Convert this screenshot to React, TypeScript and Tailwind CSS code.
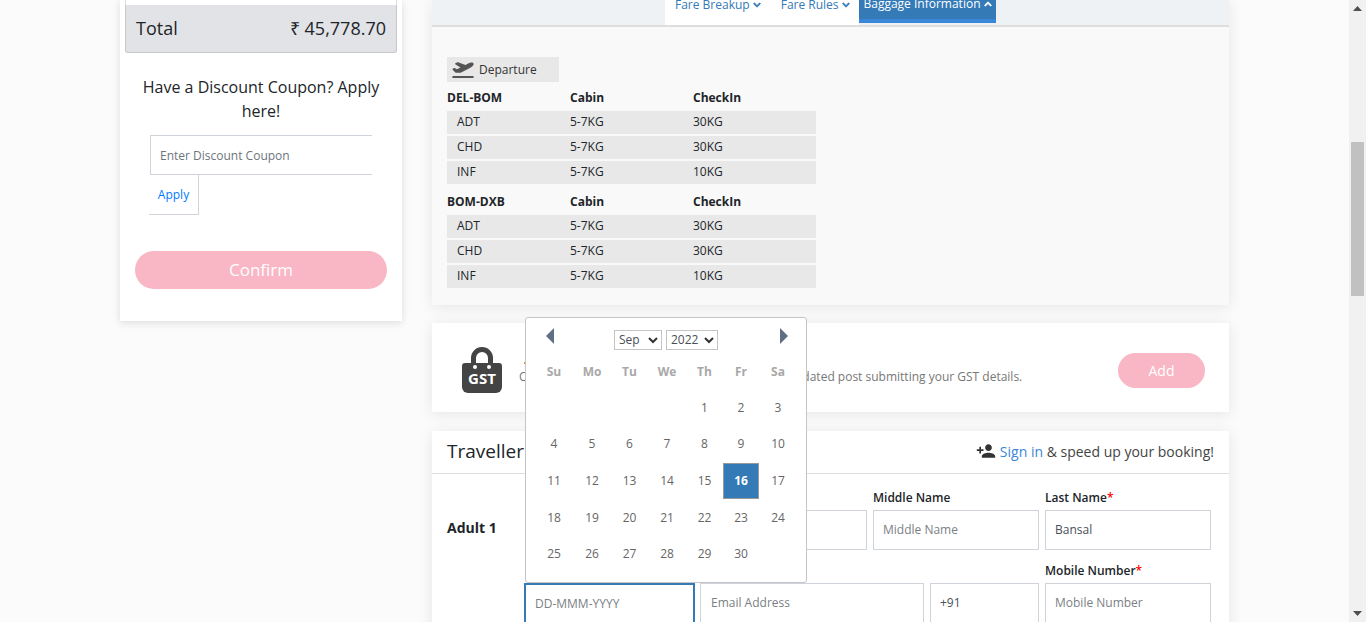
import { FaChevronDown, FaChevronUp, FaPlaneDeparture } from 'react-icons/fa'
import { MdPersonAdd } from 'react-icons/md'

const legs = [
  { route: 'DEL-BOM', rows: [['ADT', '5-7KG', '30KG'], ['CHD', '5-7KG', '30KG'], ['INF', '5-7KG', '10KG']] },
  { route: 'BOM-DXB', rows: [['ADT', '5-7KG', '30KG'], ['CHD', '5-7KG', '30KG'], ['INF', '5-7KG', '10KG']] },
]

const days = ['', '', '', '', 1, 2, 3, 4, 5, 6, 7, 8, 9, 10, 11, 12, 13, 14, 15, 16, 17, 18, 19, 20, 21, 22, 23, 24, 25, 26, 27, 28, 29, 30]

function Field({ placeholder, value, className }: { placeholder?: string; value?: string; className: string }) {
  return (
    <input
      readOnly
      placeholder={placeholder}
      defaultValue={value}
      className={`h-[40px] bg-white pb-[2px] pr-[9px] text-[12px] text-[#495057] placeholder:text-[#7b7f85] outline-none ${className}`}
    />
  )
}

function Label({ text, required, className }: { text: string; required?: boolean; className: string }) {
  return (
    <div className={`h-[23px] pt-[2px] text-[12px] leading-[18px] font-semibold text-[#212529] ${className}`}>
      {text}
      {required && <span className="text-[#ff0000]">*</span>}
    </div>
  )
}

function MonthSelect({ value, className }: { value: string; className: string }) {
  return (
    <div className={`relative h-[20px] ${className}`}>
      <select defaultValue={value} className="block h-[20px] w-full appearance-none border border-[#c5c5c5] bg-white pl-[4px] text-[12px] text-[#495057]">
        <option>{value}</option>
      </select>
      <svg width="10" height="7" viewBox="0 0 10 7" className="pointer-events-none absolute right-[4px] top-[7px]">
        <path d="M1 1l4 4 4-4" fill="none" stroke="#333" strokeWidth="2" />
      </svg>
    </div>
  )
}

function Datepicker() {
  return (
    <div className="absolute left-[93px] top-[317px] z-10 h-[266px] w-[282px] rounded-[3px] border border-[#c5c5c5] bg-white pl-[9px]">
      <div className="flex h-[40px] items-start pt-[9px]">
        <svg width="10" height="16" viewBox="0 0 10 16" className="ml-[10px] mt-[1px] text-[#5f6f86]">
          <path d="M9 0v16L1 8z" fill="currentColor" />
        </svg>
        <div className="ml-[59px] mt-[3px] flex gap-[4px]">
          <MonthSelect value="Sep" className="w-[48px]" />
          <MonthSelect value="2022" className="w-[52px]" />
        </div>
        <svg width="10" height="16" viewBox="0 0 10 16" className="ml-[61px] mt-[1px] text-[#5f6f86]">
          <path d="M1 0v16l8-8z" fill="currentColor" />
        </svg>
      </div>
      <div className="mb-[4.6px] grid h-[27px] grid-cols-[38px_38px_37px_38px_37px_36px_38px] items-center text-center text-[12px] font-bold text-[#a8a8a8]">
        {['Su', 'Mo', 'Tu', 'We', 'Th', 'Fr', 'Sa'].map(d => (
          <span key={d}>{d}</span>
        ))}
      </div>
      <div className="grid grid-cols-[38px_38px_37px_38px_37px_36px_38px] auto-rows-[36.6px] text-[12px] text-[#666]">
        {days.map((d, i) => (
          <div
            key={i}
            className={
              d === 16
                ? 'flex items-center justify-center border border-[#999] bg-[#337ab7] font-bold text-white'
                : 'flex items-center justify-center'
            }
          >
            {d}
          </div>
        ))}
      </div>
    </div>
  )
}

export default function App() {
  return (
    <div className="flex h-[622px] overflow-hidden bg-[#fbfbfb] font-['Open_Sans',sans-serif] text-[#212529]">
      <div className="flex min-w-0 flex-1 items-start gap-[30px] pl-[120px]">
        {/* Summary column */}
        <aside className="flex h-[321px] w-[282px] shrink-0 flex-col bg-white px-[5px] shadow-[0_2px_8px_rgba(0,0,0,0.12)]">
          <div className="h-[5px] border-x border-[#dcdcdc]" />
          <div className="flex h-[48px] items-center justify-between rounded-b-[3px] border border-t-0 border-[#c8c8c8] bg-[#e2e3e7] px-[10px] text-[18px]">
            <span>Total</span>
            <span>₹ 45,778.70</span>
          </div>
          <p className="mx-auto mt-[22px] w-[250px] text-center text-[16px] leading-[24px]">
            Have a Discount Coupon? Apply here!
          </p>
          <input
            readOnly
            placeholder="Enter Discount Coupon"
            className="ml-[25px] mt-[12px] h-[40px] w-[222px] shrink-0 border border-r-0 border-[#ced4da] px-[9px] text-[12px] placeholder:text-[#6c757d] outline-none"
          />
          <div className="ml-[24px] flex h-[40px] w-[50px] shrink-0 items-center justify-center border border-l-0 border-t-0 border-[#ced4da] text-[12px] text-[#007bff]">
            Apply
          </div>
          <button className="mx-[10px] mt-[36px] h-[38px] shrink-0 rounded-full bg-[#f9b6c4] text-[17px] text-white">
            Confirm
          </button>
        </aside>

        {/* Main column */}
        <main className="relative flex w-[797px] shrink-0 flex-col">
          <section className="h-[305px] bg-[#f9f9f9] shadow-[0_2px_14px_rgba(0,0,0,0.09)]">
            <div className="flex h-[27px] justify-center border-b-2 border-[#dedede] bg-[#eef2f5] pl-[233px] pr-[233px]">
              <div className="flex h-[25px] w-[194px] shrink-0 items-start gap-[20px] bg-white pl-[10px] text-[12px] leading-[10px] text-[#337ab7]">
                <span className="flex items-center gap-[3px]">Fare Breakup <FaChevronDown className="size-[8px] [stroke-width:50]" /></span>
                <span className="flex items-center gap-[3px]">Fare Rules <FaChevronDown className="size-[8px] [stroke-width:50]" /></span>
              </div>
              <div className="h-[23px] w-[137px] shrink-0 overflow-hidden border-b-[4px] border-[#3a87d9] bg-[#337ab7] text-center text-[12px] leading-[6px] text-white">
                <span className="inline-flex items-center gap-[3px]">Baggage Information <FaChevronUp className="size-[8px] [stroke-width:50]" /></span>
              </div>
            </div>
            <div className="px-[15px] pt-[30px]">
              <div className="flex h-[25px] w-[112px] items-center gap-[5px] bg-[#e8e8e8] pl-[5px] text-[12px] text-[#333]">
                <FaPlaneDeparture className="h-[17px] w-[22px] text-[#555]" />
                Departure
              </div>
              {legs.map(leg => (
                <div key={leg.route} className="mb-[2px] w-[369px] text-[12px]">
                  <div className="grid h-[29px] grid-cols-3 items-center pt-[2px] font-bold">
                    <span>{leg.route}</span>
                    <span>Cabin</span>
                    <span>CheckIn</span>
                  </div>
                  <div className="flex flex-col gap-[2px]">
                    {leg.rows.map(r => (
                      <div key={r[0]} className="grid h-[23px] grid-cols-3 items-center bg-[#e8e8e8] pb-[2px]">
                        <span className="pl-[10px]">{r[0]}</span>
                        <span>{r[1]}</span>
                        <span>{r[2]}</span>
                      </div>
                    ))}
                  </div>
                </div>
              ))}
            </div>
          </section>

          <section className="mt-[18px] flex h-[89px] items-center bg-white pl-[30px] pr-[24px] shadow-[0_2px_14px_rgba(0,0,0,0.09)]">
            <svg width="40" height="46" viewBox="0 0 40 46" className="mt-[5px] shrink-0">
              <path d="M9 16V11a11 11 0 0 1 22 0v5h-5v-5a6 6 0 0 0-12 0v5z" fill="#444" />
              <path d="M3 16h34a3 3 0 0 1 3 3v21a6 6 0 0 1-6 6H6a6 6 0 0 1-6-6V19a3 3 0 0 1 3-3z" fill="#444" />
              <circle cx="13" cy="20" r="2" fill="#fff" />
              <circle cx="27" cy="20" r="2" fill="#fff" />
              <text x="20" y="37" textAnchor="middle" fontSize="15" fontWeight="700" fill="#fff" fontFamily="Open Sans">GST</text>
            </svg>
            <div className="ml-[17px] mt-[13px]">
              <div className="mb-[4px] ml-[5px] h-[2px] w-[2px] bg-[#e8902a]" />
              <p className="text-[12px] leading-[18px] whitespace-nowrap text-[#777]">
                Claim credit of GST charges. Your taxes may get updated post submitting your GST details.
              </p>
            </div>
            <button className="ml-auto mt-[6px] h-[35px] w-[87px] shrink-0 rounded-full bg-[#f9b6c4] text-[14px] text-white">Add</button>
          </section>

          <section className="mt-[19px] h-[300px] bg-white shadow-[0_2px_14px_rgba(0,0,0,0.09)]">
            <header className="flex h-[43px] items-center justify-between border-b border-[#dedede] px-[15px] pb-[2px]">
              <h2 className="text-[19px] font-medium">Traveller Details</h2>
              <div className="flex items-center gap-[4px] text-[14px] text-[#444]">
                <MdPersonAdd className="size-[20px] text-[#333]" />
                <span><span className="text-[#3a87d9]">Sign in</span> &amp; speed up your booking!</span>
              </div>
            </header>
            <div className="flex px-[15px] pt-[13px]">
              <div className="w-[78px] shrink-0 pt-[30px] text-[14px] font-bold">Adult 1</div>
              <div className="flex flex-col">
                <div className="flex">
                  <Label text="First Name" required className="ml-[176px] w-[172px]" />
                  <Label text="Middle Name" className="w-[172px]" />
                  <Label text="Last Name" required className="w-[166px]" />
                </div>
                <div className="flex gap-[6px]">
                  <Field placeholder="Title" className="w-[170px] border border-[#ced4da] pl-[9px]" />
                  <Field placeholder="First Name" className="w-[166px] border border-[#ced4da] pl-[9px]" />
                  <Field placeholder="Middle Name" className="w-[166px] border border-[#ced4da] pl-[9px]" />
                  <Field value="Bansal" className="w-[166px] border border-[#ced4da] pl-[9px]" />
                </div>
                <div className="mt-[10px] flex">
                  <Label text="Date of Birth" required className="w-[176px]" />
                  <Label text="Email Address" required className="w-[344px]" />
                  <Label text="Mobile Number" required className="w-[166px]" />
                </div>
                <div className="flex gap-[6px]">
                  <Field placeholder="DD-MMM-YYYY" className="-ml-[1px] w-[171px] border-2 border-b-0 border-[#337ab7] pl-[9px]" />
                  <Field placeholder="Email Address" className="-ml-[1px] w-[224px] border border-[#ced4da] pl-[10px]" />
                  <Field value="+91" className="w-[109px] border border-[#ced4da] pl-[9px]" />
                  <Field placeholder="Mobile Number" className="w-[166px] border border-[#ced4da] pl-[9px]" />
                </div>
              </div>
            </div>
          </section>
          <Datepicker />
        </main>
      </div>

      {/* Scrollbar */}
      <div className="flex w-[17px] shrink-0 flex-col items-center justify-between bg-[#f1f1f1] py-[6px]">
        <svg width="9" height="5" viewBox="0 0 9 5"><path d="M4.5 0L9 5H0z" fill="#505050" /></svg>
        <div className="mb-auto mt-[131px] h-[154px] w-[13px] bg-[#c1c1c1]" />
        <svg width="9" height="5" viewBox="0 0 9 5"><path d="M0 0h9L4.5 5z" fill="#505050" /></svg>
      </div>
    </div>
  )
}
